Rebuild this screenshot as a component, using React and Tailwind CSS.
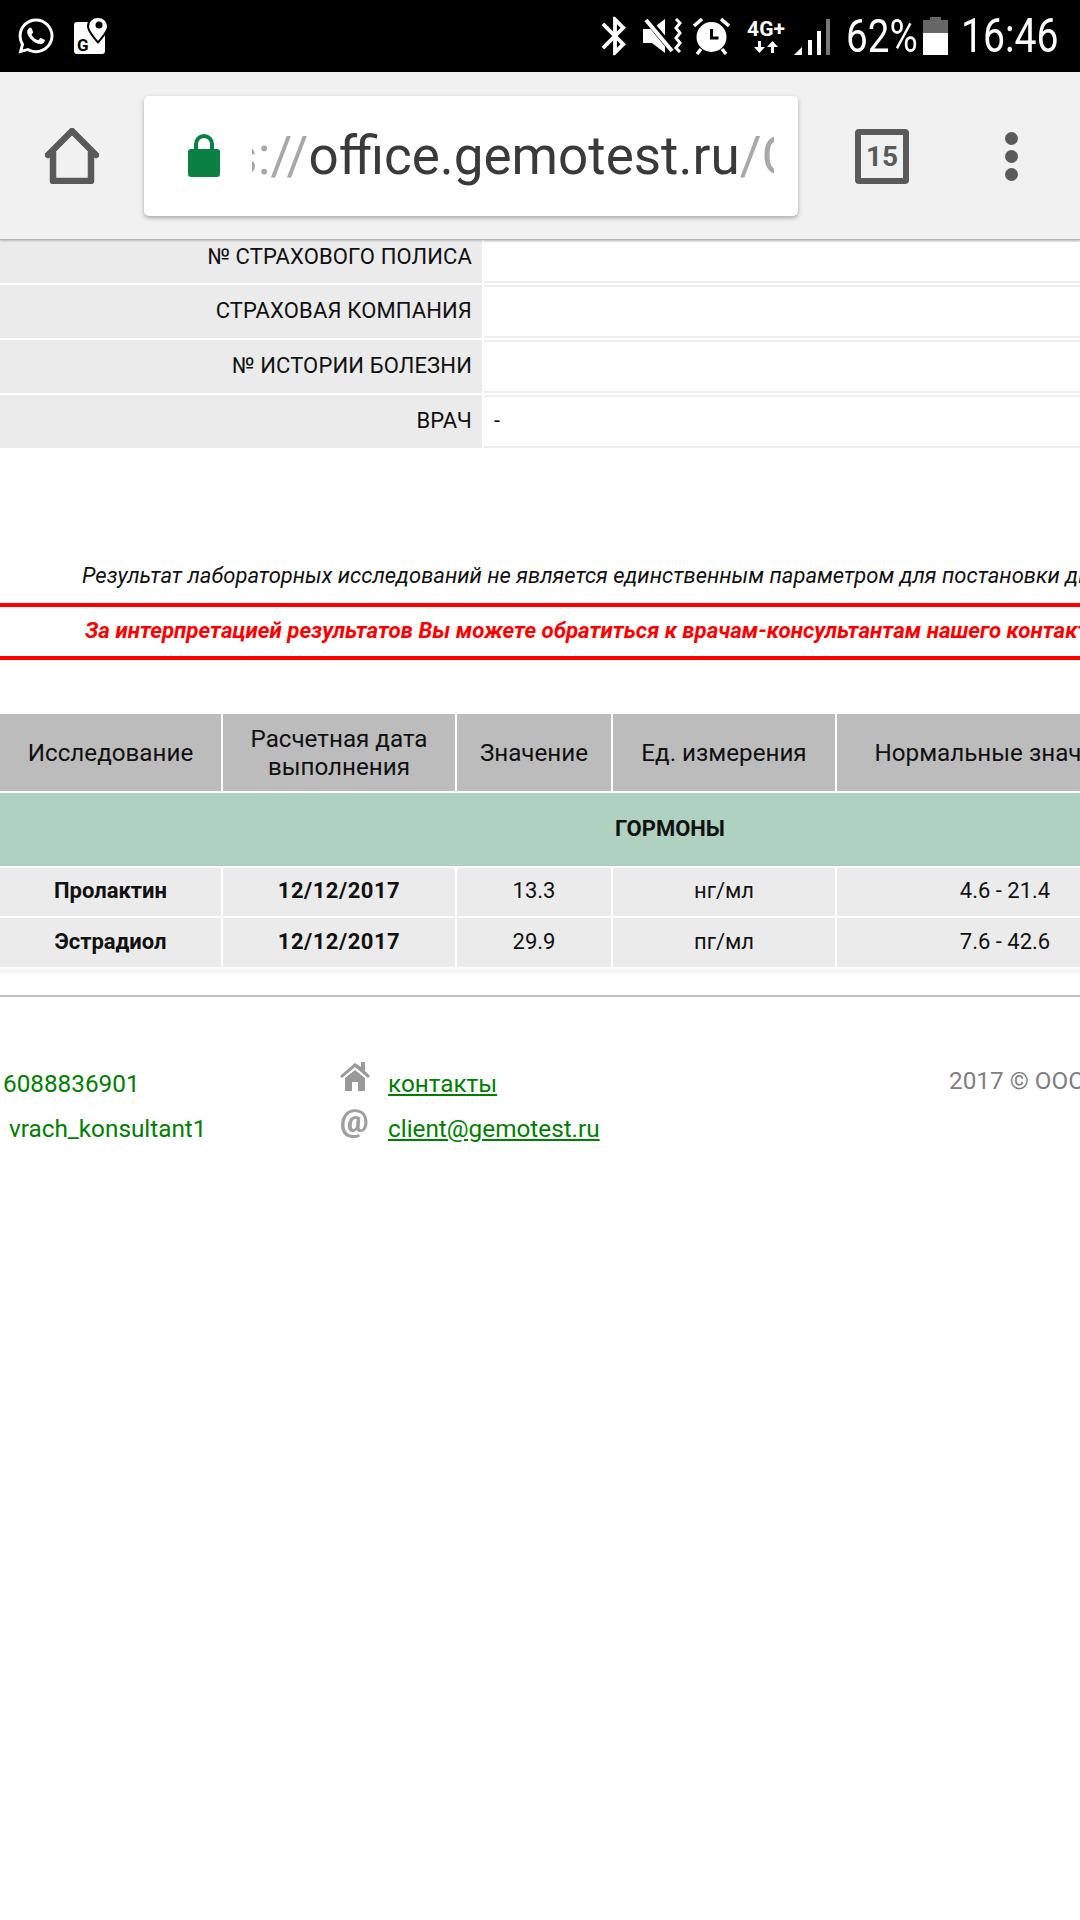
import { FaWhatsapp } from "react-icons/fa";
import { MdBluetooth } from "react-icons/md";

const infoRows = [
  { label: "№ СТРАХОВОГО ПОЛИСА", value: "", height: "h-[43px] items-end pb-[13px]" },
  { label: "СТРАХОВАЯ КОМПАНИЯ", value: "", height: "h-[53px] items-center pb-[2px]" },
  { label: "№ ИСТОРИИ БОЛЕЗНИ", value: "", height: "h-[53px] items-center pb-[2px]" },
  { label: "ВРАЧ", value: "-", height: "h-[53px] items-center pb-[2px]" },
];

const results = [
  { name: "Пролактин", date: "12/12/2017", value: "13.3", unit: "нг/мл", range: "4.6 - 21.4", height: "h-[48px]" },
  { name: "Эстрадиол", date: "12/12/2017", value: "29.9", unit: "пг/мл", range: "7.6 - 42.6", height: "h-[49px]" },
];

const gridCols = "grid grid-cols-[221px_232px_154px_222px_336px_165px] gap-x-[2px]";
const dataCell = "bg-[#ebebeb] flex items-center justify-center pb-[3px]";
const headCell = "bg-[#bcbcbc] flex items-center justify-center pt-[1px]";

function MapsIcon() {
  return (
    <svg width="34" height="38" viewBox="0 0 34 38" className="ml-[18px]">
      <rect x="0" y="5" width="31" height="32" rx="3" fill="#fff" />
      <path d="M24 0c-6 0-10 4-10 9.500 0 5 6 11 10 16 4-5 10-11 10-16C34 4 30 0 24 0z" fill="#fff" stroke="#000" strokeWidth="2" />
      <circle cx="25" cy="8" r="3.500" fill="#000" />
      <text x="3" y="34" fontSize="17" fontWeight="700" fill="#000" fontFamily="Roboto, sans-serif">G</text>
    </svg>
  );
}

function MuteIcon() {
  return (
    <svg width="39" height="38" viewBox="0 0 39 38" fill="none" className="ml-[5px]">
      <path d="M0 12h9L22 2v34L9 26H0z" fill="#fff" />
      <path d="M3 1l28 34" stroke="#000" strokeWidth="7" />
      <path d="M3 3l26 31" stroke="#fff" strokeWidth="4" />
      <path d="M33 2l4 4-4 5 4 5-4 5 4 5-4 5 4 4" stroke="#fff" strokeWidth="3" />
    </svg>
  );
}

function AlarmIcon() {
  return (
    <svg width="37" height="38" viewBox="0 0 37 38" fill="none" className="ml-[11px]">
      <circle cx="18.500" cy="20" r="15" fill="#fff" />
      <path d="M18.500 12v9h7" stroke="#000" strokeWidth="3" />
      <path d="M1 9l8-7M36 9l-8-7M8 32l-4 5M29 32l4 5" stroke="#fff" strokeWidth="3.500" />
    </svg>
  );
}

function NetworkIcon() {
  return (
    <div className="w-[38px] ml-[17px] flex flex-col items-center">
      <span className="text-[21px] font-bold leading-[22px] whitespace-nowrap">4G+</span>
      <svg width="24" height="14" viewBox="0 0 24 14" fill="#fff">
        <path d="M4 1h3v6h4l-5.500 6L0 7h4z" />
        <path d="M17 13h3V7h4l-5.500-6L13 7h4z" />
      </svg>
    </div>
  );
}

function SignalIcon() {
  return (
    <svg width="37" height="37" viewBox="0 0 37 37" className="ml-[9px]">
      <path d="M0 37l8-8v8z" fill="#fff" />
      <rect x="14" y="22" width="4" height="15" fill="#fff" />
      <rect x="23" y="13" width="4" height="24" fill="#fff" />
      <rect x="32" y="1" width="4" height="36" fill="#777" />
    </svg>
  );
}

function BatteryIcon() {
  return (
    <svg width="25" height="38" viewBox="0 0 25 38" className="ml-[8px]">
      <path d="M7 0h11v3h7v13H0V3h7z" fill="#666" />
      <rect x="0" y="16" width="25" height="22" fill="#fff" />
    </svg>
  );
}

function HomeIcon() {
  return (
    <svg width="54" height="56" viewBox="0 0 54 56" fill="none" stroke="#5a5a5a" strokeWidth="6.500" strokeLinejoin="round" strokeLinecap="round">
      <path d="M3 27L27 3l24 24" />
      <path d="M8 25v28h38V25" />
    </svg>
  );
}

function LockIcon() {
  return (
    <svg width="32" height="43" viewBox="0 0 32 43">
      <path d="M8 15V10a8 8 0 0 1 16 0v5" fill="none" stroke="#0b8043" strokeWidth="4" />
      <rect x="0" y="15" width="32" height="28" rx="3" fill="#0b8043" />
    </svg>
  );
}

function GrayHomeIcon() {
  return (
    <svg width="30" height="30" viewBox="0 0 30 30" className="mb-[15px] blur-[0.5px]">
      <path d="M15 2L0 15l2 2 13-11 13 11 2-2-5-5V1h-4v5z" fill="#999999" />
      <path d="M5 17l10-8 10 8v13h-7v-9h-6v9H5z" fill="#999999" />
    </svg>
  );
}

export default function App() {
  return (
    <div className="w-[1080px] h-[1920px] overflow-hidden bg-white font-['Roboto',sans-serif] text-[22px] text-[#111]">
      {/* status bar */}
      <div className="h-[72px] bg-black flex items-center justify-between text-white">
        <div className="flex items-center pl-[16px]">
          <FaWhatsapp size={40} />
          <MapsIcon />
        </div>
        <div className="flex items-center pr-[22px]">
          <MdBluetooth size={46} />
          <MuteIcon />
          <AlarmIcon />
          <NetworkIcon />
          <SignalIcon />
          <span className="w-[69px] ml-[15px] text-[46px] leading-none inline-block origin-left scale-x-[0.84] whitespace-nowrap">62%</span>
          <BatteryIcon />
          <span className="w-[97px] ml-[13px] text-[48px] leading-none inline-block origin-left scale-x-[0.815] whitespace-nowrap">16:46</span>
        </div>
      </div>

      {/* browser toolbar */}
      <div className="h-[168px] bg-[#f1f1f1] flex items-center border-b border-[#b5b5b5] shadow-[0_1px_2px_rgba(0,0,0,0.2)] relative">
        <div className="w-[144px] flex justify-center">
          <HomeIcon />
        </div>
        <div className="w-[654px] h-[120px] bg-white rounded-[5px] shadow-[0_2px_4px_rgba(0,0,0,0.3)] flex items-center pl-[44px]">
          <LockIcon />
          <div className="w-[522px] ml-[32px] overflow-hidden">
            <div className="whitespace-nowrap text-[53px] leading-[70px] text-[#a8a8a8] flex justify-end mr-[-22px]">
              https://<span className="text-[#3a3a3a]">office.gemotest.ru</span>/C
            </div>
          </div>
        </div>
        <div className="w-[282px] flex items-center pl-[57px] mt-[2px]">
          <div className="w-[54px] h-[55px] border-[6px] border-[#5a5a5a] rounded-[4px] flex items-center justify-center text-[28px] font-bold text-[#5a5a5a]">
            15
          </div>
          <div className="ml-[96px] flex flex-col gap-[5px]">
            <span className="w-[13px] h-[13px] rounded-full bg-[#5a5a5a]" />
            <span className="w-[13px] h-[13px] rounded-full bg-[#5a5a5a]" />
            <span className="w-[13px] h-[13px] rounded-full bg-[#5a5a5a]" />
          </div>
        </div>
      </div>

      {/* patient info */}
      <div className="flex flex-col gap-[2px] w-[1340px]">
        {infoRows.map((row) => (
          <div key={row.label} className="flex gap-[2px]">
            <div className={`w-[482px] shrink-0 bg-[#ebebeb] flex justify-end pr-[10px] tracking-[0.15px] ${row.height}`}>
              <span className="whitespace-nowrap leading-[26px]">{row.label}</span>
            </div>
            <div className="flex-1 border-y-2 border-[#eeeeee] flex items-center pl-[10px] pb-[2px]">{row.value}</div>
          </div>
        ))}
      </div>

      {/* notices */}
      <div className="mt-[110px] w-[1500px] italic whitespace-nowrap">
        <div className="pl-[82px] h-[36px] leading-[36px]">
          Результат лабораторных исследований не является единственным параметром для постановки диагноза
        </div>
        <div className="mt-[9px] h-[57px] border-y-4 border-[#ff0000] text-[#ff0000] text-[22.3px] font-bold flex items-center pl-[85px] pb-[2px]">
          За интерпретацией результатов Вы можете обратиться к врачам-консультантам нашего контакт-центра
        </div>
      </div>

      {/* results table */}
      <div className="mt-[54px] w-[1340px] flex flex-col gap-y-[2px] text-center">
        <div className={`${gridCols} h-[77px] text-[24.2px]`}>
          <div className={headCell}>Исследование</div>
          <div className="bg-[#bcbcbc] flex items-center justify-center leading-[28px]">Расчетная дата<br />выполнения</div>
          <div className={headCell}>Значение</div>
          <div className={headCell}>Ед. измерения</div>
          <div className={`${headCell} whitespace-nowrap`}>Нормальные значения</div>
          <div className="bg-[#bcbcbc]" />
        </div>
        <div className="h-[73px] bg-[#aed1c0] flex items-center justify-center font-bold pb-[2px]">ГОРМОНЫ</div>
        {results.map((row) => (
          <div key={row.name} className={`${gridCols} ${row.height}`}>
            <div className={`${dataCell} font-bold`}>{row.name}</div>
            <div className={`${dataCell} font-bold tracking-[0.5px]`}>{row.date}</div>
            <div className={dataCell}>{row.value}</div>
            <div className={dataCell}>{row.unit}</div>
            <div className={dataCell}>{row.range}</div>
            <div className="bg-[#ebebeb]" />
          </div>
        ))}
        <div className="h-[4px] bg-[#f5f5f5]" />
      </div>

      <div className="mt-[22px] h-[2px] bg-[#c4c4c4]" />

      {/* footer */}
      <div className="flex w-[1340px] pt-[64px] text-[24.3px]">
        <div className="w-[340px] shrink-0 text-[#008000] pl-[3px]">
          <div className="h-[45px] leading-[45px]">6088836901</div>
          <div className="h-[45px] leading-[45px] pl-[6px]">vrach_konsultant1</div>
        </div>
        <div className="w-[48px] shrink-0 flex flex-col items-start">
          <GrayHomeIcon />
          <span className="text-[#a0a0a0] font-black text-[32px] leading-[30px] blur-[0.5px]">@</span>
        </div>
        <div className="w-[561px] shrink-0 text-[#008000]">
          <div className="h-[45px] leading-[45px] underline">контакты</div>
          <div className="h-[45px] leading-[45px] underline">client@gemotest.ru</div>
        </div>
        <div className="text-[#808080] leading-[40px] whitespace-nowrap">2017 © ООО «Лаборатория Гемотест»</div>
      </div>
    </div>
  );
}
